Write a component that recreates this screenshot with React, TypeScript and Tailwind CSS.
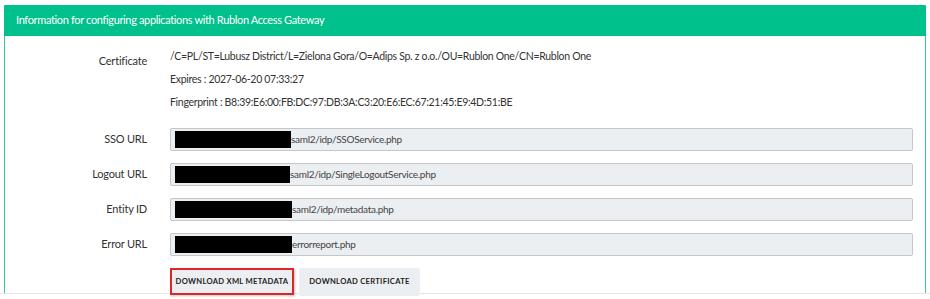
const CERT_LINES = [
  '/C=PL/ST=Lubusz District/L=Zielona Gora/O=Adips Sp. z o.o./OU=Rublon One/CN=Rublon One',
  'Expires : 2027-06-20 07:33:27',
  'Fingerprint : B8:39:E6:00:FB:DC:97:DB:3A:C3:20:E6:EC:67:21:45:E9:4D:51:BE',
];

const URL_FIELDS = [
  { label: 'SSO URL', suffix: 'saml2/idp/SSOService.php', redact: 'w-[116px]' },
  { label: 'Logout URL', suffix: 'saml2/idp/SingleLogoutService.php', redact: 'w-[115px]' },
  { label: 'Entity ID', suffix: 'saml2/idp/metadata.php', redact: 'w-[117px]' },
  { label: 'Error URL', suffix: 'errorreport.php', redact: 'w-[117px]' },
];

export default function App() {
  return (
    <div className="w-[930px] h-[299px] bg-white overflow-hidden font-['Lato',sans-serif] text-[#333]">
      <div className="pt-[5px] px-[4px]">
        <div className="border-x border-[#3cc79a]">
          <div className="bg-[#00c08b] h-[31px] flex items-center px-[12px] -mx-px rounded-t-[2px]">
            <span className="text-white text-[11px] tracking-[-0.35px]">Information for configuring applications with Rublon Access Gateway</span>
          </div>

          <div className="pt-[9px] pr-[12px] h-[257px]">
            <div className="grid grid-cols-[142px_1fr] gap-x-[23px]">
              <div className="text-right text-[11px] tracking-[-0.2px] pt-[8px]">Certificate</div>
              <div className="flex flex-col text-[10.5px] tracking-[-0.3px]">
                {CERT_LINES.map((line) => (
                  <div key={line} className="h-[23px] flex items-center">{line}</div>
                ))}
              </div>
            </div>

            <div className="mt-[14px] flex flex-col gap-[12px]">
              {URL_FIELDS.map((f) => (
                <div key={f.label} className="grid grid-cols-[142px_1fr] gap-x-[23px] items-center">
                  <div className="text-right text-[11px] tracking-[-0.2px]">{f.label}</div>
                  <div className="h-[23px] bg-[#eceff1] border border-[#c3c7ca] rounded-[2px] flex items-center pl-[4px] text-[10px] tracking-[-0.3px] text-[#444]">
                    <span className={`${f.redact} h-[17px] bg-black`} />
                    <span>{f.suffix}</span>
                  </div>
                </div>
              ))}
            </div>

            <div className="mt-[12px] ml-[165px] flex gap-[5px]">
              <button className="h-[27px] w-[124px] bg-[#eceff1] border-2 border-[#e0262b] shadow-[1px_1px_2px_rgba(0,0,0,0.25)] text-[7.6px] font-bold tracking-[0.3px] text-[#222]">
                DOWNLOAD XML METADATA
              </button>
              <button className="h-[28px] w-[121px] bg-[#eceff1] rounded-[2px] text-[7.6px] font-bold tracking-[0.3px] text-[#222]">
                DOWNLOAD CERTIFICATE
              </button>
            </div>
          </div>
        </div>
      </div>
      <div className="h-px bg-[#e5e7ea]" />
    </div>
  );
}
